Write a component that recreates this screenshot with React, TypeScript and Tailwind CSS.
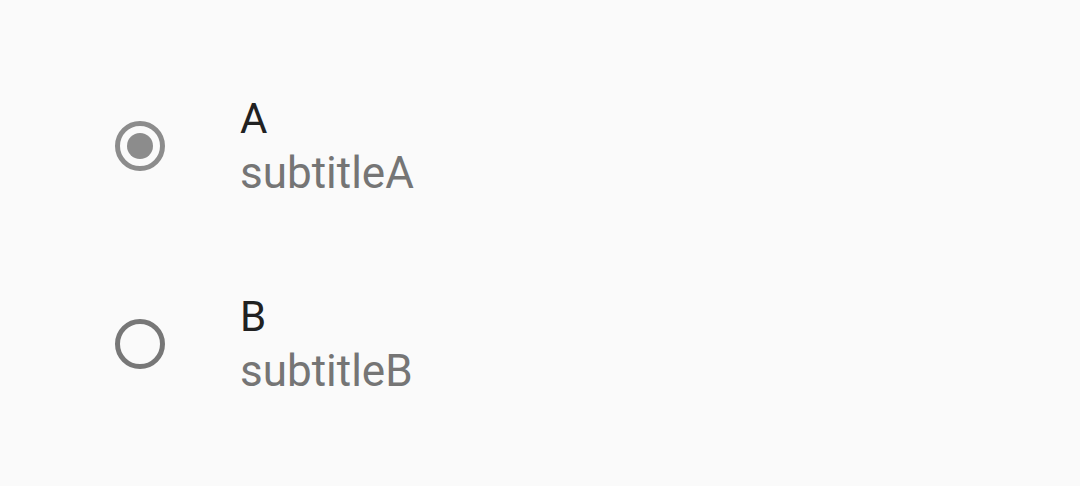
import React, { useState } from "react";

type Item = { id: string; title: string; subtitle: string };

const items: Item[] = [
  { id: "A", title: "A", subtitle: "subtitleA" },
  { id: "B", title: "B", subtitle: "subtitleB" },
];

const Radio: React.FC<{ checked: boolean }> = ({ checked }) => (
  <div
    className={`flex h-[50px] w-[50px] shrink-0 items-center justify-center rounded-full border-[5px] ${
      checked ? "border-[#8c8c8c]" : "border-[#777777]"
    }`}
  >
    {checked && <div className="h-[26px] w-[26px] rounded-full bg-[#8c8c8c]" />}
  </div>
);

export default function App() {
  const [selected, setSelected] = useState("A");

  return (
    <div
      className="h-[486px] w-[1080px] bg-[#fafafa] pt-[47px]"
      style={{ fontFamily: "Roboto, 'Noto Sans', sans-serif" }}
    >
      {items.map((item) => (
        <div
          key={item.id}
          onClick={() => setSelected(item.id)}
          className="flex h-[198px] cursor-pointer items-center gap-[75px] pl-[115px]"
        >
          <Radio checked={selected === item.id} />
          <div className="flex flex-col">
            <span className="text-[42px] leading-[54px] text-[#212121]">{item.title}</span>
            <span className="text-[44px] leading-[54px] text-[#757575]">{item.subtitle}</span>
          </div>
        </div>
      ))}
    </div>
  );
}
